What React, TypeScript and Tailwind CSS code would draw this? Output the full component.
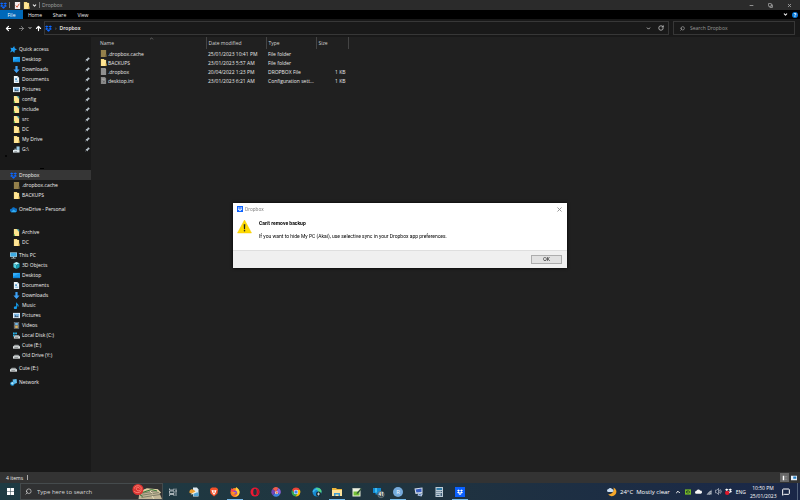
import type { ReactNode } from "react";
import { ArrowLeft, ArrowRight, ArrowUp, ChevronDown, ChevronUp, Copy, MessageSquare, Minus, RotateCw, Search, X } from "lucide-react";

type IconName =
  | "star" | "desktop" | "download" | "document" | "picture" | "folder" | "folderTag" | "folderDim"
  | "drive" | "osDrive" | "netDrive" | "dropbox" | "cloud" | "pc" | "cube" | "music" | "video"
  | "network" | "file" | "config";

type TreeItem = {
  label: string;
  icon: IconName;
  root?: boolean;
  pinned?: boolean;
  selected?: boolean;
};

const shapes: Record<IconName, ReactNode> = {
  star: <path d="m9.500 0 1.500 5 5 3-5 2-1 6-4-4-6 3 3-6-2-5 5 .5z" fill="#1d9bf0" />,
  desktop: (
    <>
      <path d="M0 2h16v12H0z" fill="#1595ea" />
      <path d="M0 2h16L0 10z" fill="#35adf8" />
      <path d="M1 12h14v1H1z" fill="#0967ad" />
    </>
  ),
  download: <path d="M5.500 0h5v8H15l-7 8-7-8h4.500z" fill="#3da0f5" />,
  document: (
    <>
      <path d="M2 0h8l4 4v12H2z" fill="#eef4f8" />
      <path d="M10 0v4h4" fill="#a9bfce" />
      <path d="M5 5h4v4H5zM5 10h7v1H5zM5 12h7v1H5z" fill="#4b98cd" />
    </>
  ),
  picture: (
    <>
      <path d="M0 2h16v12H0z" fill="#e9f2fa" />
      <path d="M2 4h12v5H2z" fill="#7cb9e8" />
      <path d="m2 12 4-5 3 3 2-2 3 4z" fill="#365c7d" />
    </>
  ),
  folder: (
    <>
      <path d="M2 0h7l1 2h4v14H2z" fill="#f4d778" />
      <path d="M3 2h10v14H3z" fill="#ffe596" />
      <path d="M12 10h3v6h-3z" fill="#e6bf58" />
    </>
  ),
  folderTag: (
    <>
      <path d="M2 0h8l4 3v13H2z" fill="#ffe48d" />
      <path d="m8 0 6 7V1z" fill="#3b9aa8" />
      <path d="M2 12h2v4H2z" fill="#35b54a" />
    </>
  ),
  folderDim: (
    <>
      <path d="M2 0h12v16H2z" fill="#94804b" />
      <path d="M12 10h3v6h-3z" fill="#75643a" />
    </>
  ),
  drive: (
    <>
      <path d="m4 6-4 4v4h16v-4l-4-4z" fill="#9a9fa1" />
      <path d="M0 10h16v5H0z" fill="#e1e5e6" />
      <path d="M3 12h9v1H3z" fill="#343a3b" />
    </>
  ),
  osDrive: (
    <>
      <path d="M0 1h4v4H0zM5 1h4v4H5zM0 6h4v4H0z" fill="#28b6ed" />
      <path d="m5 7-3 4h14l-3-4z" fill="#979c9e" />
      <path d="M2 10h14v5H2z" fill="#dce2e4" />
      <path d="M4 12h8v1H4z" fill="#30383b" />
    </>
  ),
  netDrive: (
    <>
      <path d="M8 1h7v8H8z" fill="#9bcbe4" />
      <path d="M3 6h5v4H3z" fill="#8a979e" />
      <path d="M0 9h15v6H0z" fill="#dfe8ec" />
      <path d="M3 12h6v1H3z" fill="#4a5358" />
    </>
  ),
  dropbox: (
    <path d="M4 1 0 3.700l4 2.600 4-2.600zM12 1 8 3.700l4 2.600 4-2.600zM4 6.300 0 9l4 2.600L8 9zM12 6.300 8 9l4 2.600L16 9zM8 10l-4 2.600L8 15.200l4-2.600z" fill="#0b67ff" />
  ),
  cloud: (
    <>
      <path d="M4 14a4 4 0 0 1-.5-8A5 5 0 0 1 12 5a4 4 0 0 1 1 9z" fill="#0d6fc4" />
      <path d="m2 14 6-6 7 5-2 1z" fill="#32adf0" />
    </>
  ),
  pc: (
    <>
      <path d="M0 1h16v10H0z" fill="#bce4f6" />
      <path d="M1 2h14v8H1z" fill="#3daae4" />
      <path d="M7 11h2v2h4v2H3v-2h4z" fill="#b7ced8" />
    </>
  ),
  cube: (
    <>
      <path d="m8 0 7 3-7 4-7-4z" fill="#b8f3fa" />
      <path d="m1 3 7 4v9l-7-4z" fill="#4dd0e1" />
      <path d="m15 3-7 4v9l7-4z" fill="#149db5" />
    </>
  ),
  music: <path d="M7 0c1 4 6 4 6 9l-2 3c0-3-1-4-2-5v6a3.500 3.500 0 1 1-2-3z" fill="#159bea" />,
  video: (
    <>
      <path d="M2 0h12v16H2z" fill="#565c64" />
      <path d="M5 2h6v5H5z" fill="#6db6e4" />
      <path d="M5 8h6v6H5z" fill="#d6b15e" />
      <path d="M3 1v14M13 1v14" stroke="#e8eaec" strokeDasharray="1 2" />
    </>
  ),
  network: (
    <>
      <path d="m6 1 9-1 1 9-8 3z" fill="#65bfee" />
      <circle cx="5.500" cy="10.500" r="5" fill="#249bdc" />
      <path d="m2 10 3-3 4 2-3 4z" fill="#b5e5fa" />
    </>
  ),
  file: (
    <>
      <path d="M2 0h9l3 3v13H2z" fill="#909090" />
      <path d="M11 0v3h3" fill="#c2c2c2" />
    </>
  ),
  config: (
    <>
      <path d="M2 0h9l3 3v13H2z" fill="#858585" />
      <path d="M4 4h7v1H4zM4 6h7v1H4z" fill="#bdbdbd" />
      <circle cx="9" cy="11" r="2.500" fill="#4a4a4a" stroke="#bcbcbc" />
    </>
  ),
};

function Icon({ name, className = "size-[7px]" }: { name: IconName; className?: string }) {
  return (
    <svg viewBox="0 0 16 16" className={`shrink-0 ${className}`} aria-hidden="true">
      {shapes[name]}
    </svg>
  );
}

const quickAccess: TreeItem[] = [
  { label: "Quick access", icon: "star", root: true },
  { label: "Desktop", icon: "desktop", pinned: true },
  { label: "Downloads", icon: "download", pinned: true },
  { label: "Documents", icon: "document", pinned: true },
  { label: "Pictures", icon: "picture", pinned: true },
  { label: "config", icon: "folderTag", pinned: true },
  { label: "include", icon: "folderTag", pinned: true },
  { label: "src", icon: "folderTag", pinned: true },
  { label: "DC", icon: "folder", pinned: true },
  { label: "My Drive", icon: "folder", pinned: true },
  { label: "G:\\", icon: "netDrive", pinned: true },
];

const dropbox: TreeItem[] = [
  { label: "Dropbox", icon: "dropbox", root: true, selected: true },
  { label: ".dropbox.cache", icon: "folderDim" },
  { label: "BACKUPS", icon: "folder" },
];

const thisPc: TreeItem[] = [
  { label: "This PC", icon: "pc", root: true },
  { label: "3D Objects", icon: "cube" },
  { label: "Desktop", icon: "desktop" },
  { label: "Documents", icon: "document" },
  { label: "Downloads", icon: "download" },
  { label: "Music", icon: "music" },
  { label: "Pictures", icon: "picture" },
  { label: "Videos", icon: "video" },
  { label: "Local Disk (C:)", icon: "osDrive" },
  { label: "Cute (E:)", icon: "drive" },
  { label: "Old Drive (Y:)", icon: "drive" },
];

const files: { name: string; icon: IconName; date: string; type: string; size: string }[] = [
  { name: ".dropbox.cache", icon: "folderDim", date: "25/01/2023 10:41 PM", type: "File folder", size: "" },
  { name: "BACKUPS", icon: "folder", date: "23/01/2023 5:57 AM", type: "File folder", size: "" },
  { name: ".dropbox", icon: "file", date: "20/04/2022 1:23 PM", type: "DROPBOX File", size: "1 KB" },
  { name: "desktop.ini", icon: "config", date: "23/01/2023 6:21 AM", type: "Configuration sett...", size: "1 KB" },
];

function TreeGroup({ items }: { items: TreeItem[] }) {
  return (
    <ul>
      {items.map((item) => (
        <li key={item.label}>
          <a
            href="#"
            className={`flex h-[10px] items-center gap-[2px] pr-px ${item.root ? "pl-[10px]" : "pl-[13px]"} ${
              item.selected ? "bg-[#363636]" : ""
            }`}
          >
            <Icon name={item.icon} />
            <span>{item.label}</span>
            {item.pinned && (
              <svg viewBox="0 0 10 10" className="ml-auto size-[5px]" aria-hidden="true">
                <path d="m6 0 4 4-2 .5-2 2V9L3.500 6.500 0 10l2.500-4.500L1 4h2.500l2-2z" fill="#b5c0c8" />
              </svg>
            )}
          </a>
        </li>
      ))}
    </ul>
  );
}

function TitleBar() {
  return (
    <header className="flex h-[10px] items-center bg-[#2b2b2b] text-[#a5a5a5]">
      <Icon name="dropbox" />
      <span className="ml-[2px] h-[6px] w-px bg-[#777]" />
      <button aria-label="Properties" className="ml-[4px]">
        <svg viewBox="0 0 16 16" className="size-[7px]">
          <path d="M2 0h12v16H2z" fill="#f6eeee" />
          <path d="m4 8 3 4 5-8" fill="none" stroke="#d5502c" strokeWidth="2" />
        </svg>
      </button>
      <button aria-label="New folder" className="ml-[2px]">
        <Icon name="folder" className="size-[7px]" />
      </button>
      <button aria-label="Customise toolbar" className="ml-[2px]">
        <ChevronDown className="size-[5px] text-[#eee]" strokeWidth={5} />
      </button>
      <span className="mx-[2px] h-[6px] w-px bg-[#777]" />
      <h1>Dropbox</h1>
      <div className="ml-auto flex items-center gap-[14px] pr-[8px]">
        <button aria-label="Minimise"><Minus className="size-[5px]" strokeWidth={4} /></button>
        <button aria-label="Restore"><Copy className="size-[5px] -scale-x-100 rotate-90" strokeWidth={4} /></button>
        <button aria-label="Close"><X className="size-[5px]" strokeWidth={4} /></button>
      </div>
    </header>
  );
}

function Ribbon() {
  return (
    <nav className="flex h-[9px] items-center bg-black text-[#eee]">
      <button className="h-[9px] w-[23px] bg-[#0068b8] text-white">File</button>
      <button className="w-[24px]">Home</button>
      <button className="w-[25px]">Share</button>
      <button className="w-[22px]">View</button>
      <button aria-label="Expand ribbon" className="ml-auto"><ChevronDown className="size-[5px]" strokeWidth={5} /></button>
      <button aria-label="Help" className="mr-[2px] ml-[4px] flex size-[6px] items-center justify-center rounded-full bg-[#0a79d8] font-bold text-white">?</button>
    </nav>
  );
}

function AddressBar() {
  return (
    <div className="flex h-[18px] items-center bg-[#191919] pr-[5px]">
      <div className="flex w-[44px] items-center text-white">
        <button aria-label="Back" className="ml-[5px]"><ArrowLeft className="size-[7px]" strokeWidth={4} /></button>
        <button aria-label="Forward" className="ml-[6px] text-[#8d8d8d]"><ArrowRight className="size-[7px]" strokeWidth={3} /></button>
        <button aria-label="Recent locations" className="ml-[3px]"><ChevronDown className="size-[4px]" strokeWidth={5} /></button>
        <button aria-label="Up" className="ml-[3px]"><ArrowUp className="size-[7px]" strokeWidth={4} /></button>
      </div>
      <div className="flex h-[14px] flex-1 items-center border border-[#373737] text-[#f0f0f0]">
        <Icon name="dropbox" />
        <span className="mx-[3px] text-[#a0a0a0]">›</span>
        <span className="font-semibold">Dropbox</span>
        <button aria-label="Previous locations" className="ml-auto text-[#ccc]"><ChevronDown className="size-[5px]" strokeWidth={4} /></button>
        <button aria-label="Refresh" className="mr-[4px] ml-[7px] text-[#ccc]"><RotateCw className="size-[6px]" strokeWidth={3} /></button>
      </div>
      <label className="ml-[4px] flex h-[14px] w-[122px] items-center border border-[#373737]">
        <Search className="ml-[6px] size-[5px] -scale-x-100 text-[#aaa]" strokeWidth={3} />
        <input aria-label="Search Dropbox" placeholder="Search Dropbox" className="ml-[5px] min-w-0 flex-1 bg-transparent outline-none placeholder:text-[#999]" />
      </label>
    </div>
  );
}

function Sidebar() {
  return (
    <aside className="w-[91px] shrink-0 bg-[#191919] pt-[7px] text-[#f2f2f2]">
      <TreeGroup items={quickAccess} />
      <div className="flex h-[16px] items-center justify-between pr-[47px] pl-[5px]" aria-hidden="true">
        <span className="mb-[12px] size-[2px] bg-black/70" />
        <span className="mt-[12px] h-px w-[4px] bg-black" />
      </div>
      <TreeGroup items={dropbox} />
      <div className="mt-[4px] mb-[13px]">
        <TreeGroup items={[{ label: "OneDrive - Personal", icon: "cloud", root: true }]} />
      </div>
      <TreeGroup items={[{ label: "Archive", icon: "folderTag" }, { label: "DC", icon: "folder" }]} />
      <div className="my-[3px]"><TreeGroup items={thisPc} /></div>
      <TreeGroup items={[{ label: "Cute (E:)", icon: "drive", root: true }]} />
      <div className="mt-[4px]"><TreeGroup items={[{ label: "Network", icon: "network", root: true }]} /></div>
    </aside>
  );
}

function FileTable() {
  return (
    <main className="flex-1 bg-[#202020]">
      <table className="w-[258px] table-fixed text-[#e8e8e8]">
        <thead className="text-[#d2d2d2]">
          <tr className="h-[12px] text-left">
            <th className="relative w-[115px] border-r border-[#444] pl-[9px] font-normal">
              Name
              <ChevronUp className="absolute -top-px left-[58px] size-[5px] text-[#bbb]" />
            </th>
            <th className="w-[60px] border-r border-[#444] pl-[2px] font-normal">Date modified</th>
            <th className="w-[50px] border-r border-[#444] pl-[2px] font-normal">Type</th>
            <th className="border-r border-[#444] pl-[2px] font-normal">Size</th>
          </tr>
        </thead>
        <tbody>
          {files.map((file) => (
            <tr key={file.name} className="h-[9px] whitespace-nowrap">
              <td className="pl-[9px]">
                <div className="flex items-center gap-px">
                  <Icon name={file.icon} className="size-[7px]" />
                  {file.name}
                </div>
              </td>
              <td className="pl-[2px]">{file.date}</td>
              <td className="pl-[2px]">{file.type}</td>
              <td className="pr-[3px] text-right">{file.size}</td>
            </tr>
          ))}
        </tbody>
      </table>
    </main>
  );
}

function StatusBar() {
  return (
    <footer className="flex h-[11px] items-center bg-[#333] pl-[6px] text-[#eee]">
      <span>4 items</span>
      <span className="ml-[4px] h-[5px] w-px bg-[#aaa]" />
      <button aria-label="Details view" className="ml-auto flex h-[9px] w-[9px] items-center justify-center bg-[#686868]">
        <svg viewBox="0 0 8 8" className="size-[6px]"><path d="M1 1h2v6H1z" fill="#fff" /><path d="M4 2h3M4 4h3M4 6h3" stroke="#aaa" strokeWidth=".6" /></svg>
      </button>
      <button aria-label="Large icons view" className="mr-[3px] ml-[2px]">
        <svg viewBox="0 0 8 8" className="size-[6px]"><path d="M0 1h8v6H0z" fill="#e6f0f8" /><path d="M3 2h4v3H3z" fill="#207cc5" /></svg>
      </button>
    </footer>
  );
}

function Dialog() {
  return (
    <div className="pointer-events-none fixed inset-0 flex items-center justify-center pb-[29px]">
      <section role="dialog" aria-labelledby="dialog-title" className="pointer-events-auto w-[334px] bg-white font-['Roboto',sans-serif] text-black shadow-[0_0_3px_#000]">
        <header className="flex h-[12px] items-center px-[4px] text-[#8a8a8a]">
          <svg viewBox="0 0 16 16" className="mr-[2px] size-[6px]" aria-hidden="true">
            <path d="M0 0h16v16H0z" fill="#0b61ff" />
            <path d="m5 3-3 2 3 2 3-2 3 2 3-2-3-2-3 2zM5 7 2 9l3 2 3-2 3 2 3-2-3-2-3 2zM8 10l-3 2 3 2 3-2z" fill="#fff" />
          </svg>
          <span>Dropbox</span>
          <button aria-label="Close dialog" className="ml-auto"><X className="size-[7px]" strokeWidth={3} /></button>
        </header>
        <div className="flex h-[35px] gap-[7px] pt-[4px] pl-[4px]">
          <svg viewBox="0 0 28 28" className="size-[15px]" aria-hidden="true">
            <path d="M14 2 27 26H1z" fill="#ffdc00" stroke="#f3c900" strokeLinejoin="round" />
            <path d="M12.500 10h3l-.5 9h-2z" fill="#222" />
            <circle cx="14" cy="22" r="1.500" fill="#222" />
          </svg>
          <div>
            <h2 id="dialog-title" className="font-bold">Can't remove backup</h2>
            <p className="mt-[5px]">If you want to hide My PC (Akai), use selective sync in your Dropbox app preferences.</p>
          </div>
        </div>
        <footer className="flex h-[18px] items-center justify-end border-t border-[#dfdfdf] bg-[#f0f0f0] pr-[5px] pb-px">
          <button className="h-[9px] w-[31px] border border-[#adadad] bg-[#e1e1e1] leading-[7px]">OK</button>
        </footer>
      </section>
    </div>
  );
}

const apps: { label: string; open?: boolean; art: ReactNode }[] = [
  {
    label: "Task view",
    art: <path d="M3 3v3h9V3M3 18v-3h9v3M3 8h9v5H3zM16 3v15M15 8h3" fill="none" stroke="#d4dadd" strokeWidth="1.500" />,
  },
  {
    label: "File transfer",
    art: (
      <>
        <path d="M8 1h8l3 4v14H8z" fill="#dceaf2" />
        <path d="M9 11h10v7H9z" fill="#53a5d5" />
        <path d="M1 8c3-5 7-4 12 1l-5 4-7-1z" fill="#ed9f31" />
        <path d="m3 14 10-5 2 2-9 4z" fill="#f7efd8" />
      </>
    ),
  },
  {
    label: "Brave",
    art: (
      <>
        <path d="m6 1-4 3 1 9 7 6 7-6 1-9-4-3z" fill="#f3512a" />
        <path d="m5 6 5 1 5-1-2 6-3 4-3-4z" fill="#fff" />
        <path d="m8 9 2 4 2-4z" fill="#f3512a" />
      </>
    ),
  },
  {
    label: "Firefox",
    open: true,
    art: (
      <>
        <circle cx="10" cy="11" r="9" fill="#ff7b24" />
        <path d="M12 0c5 3 8 7 7 12-1 5-6 8-11 7 9-2 9-9 3-11z" fill="#ffd43b" />
        <path d="M1 8 3 2l3 4 4 1-2 3z" fill="#ff4058" />
        <circle cx="10" cy="11" r="4" fill="#8145dc" />
        <path d="M5 10c3-1 4 1 7 0-1 4-5 5-8 3z" fill="#ff9926" />
      </>
    ),
  },
  {
    label: "Opera",
    art: (
      <>
        <circle cx="10" cy="10" r="9" fill="#ed1934" />
        <ellipse cx="10" cy="10" rx="3.500" ry="6.500" fill="#24343b" />
        <path d="M13 2a9 9 0 0 1 0 16c3-4 3-12 0-16" fill="#b30d25" />
      </>
    ),
  },
  {
    label: "Photo app",
    art: (
      <>
        <path d="M10 10 3 4a9 9 0 0 1 12-2z" fill="#f05b4e" />
        <path d="m10 10 5-8a9 9 0 0 1 3 13z" fill="#8e62e3" />
        <path d="m10 10 8 5a9 9 0 0 1-14 2z" fill="#3b80df" />
        <path d="m10 10-6 7A9 9 0 0 1 3 4z" fill="#7046b8" />
        <circle cx="11" cy="11" r="3" fill="#efeef9" />
        <path d="m11 8 3 3-3 3-2-2z" fill="#ee8151" />
      </>
    ),
  },
  {
    label: "Chrome",
    art: (
      <>
        <path d="M2 6a9 9 0 0 1 16 0h-8l-3 7z" fill="#ea4335" />
        <path d="M2 6a9 9 0 0 0 7 13l4-7-5 1z" fill="#34a853" />
        <path d="M18 6a9 9 0 0 1-9 13l5-8-2-5z" fill="#fbbc05" />
        <circle cx="10" cy="10" r="4.500" fill="#fff" />
        <circle cx="10" cy="10" r="3.500" fill="#4285f4" />
      </>
    ),
  },
  {
    label: "Edge",
    art: (
      <>
        <circle cx="10" cy="10" r="9" fill="#1688ce" />
        <path d="M7 2c8-3 15 5 11 10-2 2-5 2-6 0 2-3-1-6-4-7" fill="#51d586" />
        <path d="M1 9C4 2 11 2 13 7 8 4 5 7 4 11z" fill="#3bb8ee" />
        <circle cx="13" cy="14" r="5" fill="#172c35" />
        <path d="M10 14h6M13 11v6" stroke="#e9eef0" strokeWidth="1.500" />
      </>
    ),
  },
  {
    label: "File Explorer",
    open: true,
    art: (
      <>
        <path d="M0 2h8l2 2h10v14H0z" fill="#edb73d" />
        <path d="M0 6h20v12H0z" fill="#ffe39a" />
        <path d="M4 12h12v6h-3v-3H7v3H4z" fill="#3d9bd0" />
      </>
    ),
  },
  {
    label: "Notepad++",
    art: (
      <>
        <path d="M1 2h16v17H1z" fill="#edf2df" />
        <path d="M3 9h12v8H3z" fill="#74bf36" />
        <path d="M2 3h14" stroke="#9ba29d" strokeDasharray="1 1" strokeWidth="2" />
        <path d="m18 2 2 2-8 9-3 1 1-3z" fill="#31503a" />
      </>
    ),
  },
  {
    label: "Messages",
    art: (
      <>
        <path d="M0 2h16v10H9v3H5v-3H0z" fill="#118bd3" />
        <path d="M4 2h4v9H4z" fill="#42bbef" />
        <circle cx="16" cy="15" r="6.500" fill="#394a51" stroke="#8e9799" />
        <text x="16" y="18" textAnchor="middle" fontSize="9" fontWeight="bold" fill="#fff">41</text>
      </>
    ),
  },
  {
    label: "RStudio",
    open: true,
    art: (
      <>
        <circle cx="10" cy="10" r="10" fill="#75aadb" />
        <text x="10" y="14.500" textAnchor="middle" fontSize="12" fill="#eff7ff">R</text>
      </>
    ),
  },
  {
    label: "Remote desktop",
    art: (
      <>
        <path d="m1 3 16-2v11L3 14z" fill="#d6dfed" />
        <path d="m3 5 12-2v7L5 11z" fill="#375dbd" />
        <path d="m9 12 9 1-3 6-8-2z" fill="#bed1e6" />
        <path d="m10 14 5 1-2 2-4-1z" fill="#4c70ae" />
      </>
    ),
  },
  {
    label: "Calculator",
    art: (
      <>
        <path d="M3 0h15v20H3z" fill="#bccad4" />
        <path d="M5 2h11v4H5z" fill="#317da9" />
        <path d="M5 8h2v2H5zM9 8h2v2H9zM13 8h3v2h-3zM5 12h2v2H5zM9 12h2v2H9zM13 12h3v6h-3zM5 16h6v2H5z" fill="#41617a" />
      </>
    ),
  },
  {
    label: "Dropbox",
    open: true,
    art: (
      <>
        <path d="M0 0h20v20H0z" fill="#0b61ff" />
        <path d="M7 5 4 7l3 2 3-2 3 2 3-2-3-2-3 2zM7 9l-3 2 3 2 3-2 3 2 3-2-3-2-3 2zM10 12l-3 2 3 2 3-2z" fill="#fff" />
      </>
    ),
  },
];

function Taskbar() {
  return (
    <nav aria-label="Taskbar" className="flex h-[17px] items-center bg-linear-to-r from-[#1e3b43] via-[#20343f] to-[#1a2748] text-[6px] text-white">
      <button aria-label="Start" className="flex w-[20px] justify-center">
        <svg viewBox="0 0 14 14" className="size-[7px]"><path d="M0 0h6.500v6.500H0zM7.500 0H14v6.500H7.500zM0 7.500h6.500V14H0zM7.500 7.500H14V14H7.500z" fill="#fff" /></svg>
      </button>
      <label className="flex h-full w-[143px] items-center border border-[#454b4d] bg-[#303132]">
        <Search className="ml-[4px] size-[7px] -scale-x-100 text-[#eee]" strokeWidth={2} />
        <input aria-label="Type here to search" placeholder="Type here to search" className="ml-[5px] min-w-0 flex-1 bg-transparent outline-none placeholder:text-[#d6d6d6]" />
        <svg viewBox="0 0 60 30" className="h-[15px] w-[30px]" aria-hidden="true">
          <path d="m15 17 12-7 25 1 8 19H13z" fill="#c0b596" />
          <path d="m17 19 34-6M16 23l38-6M19 27l37-6" stroke="#6b6d59" strokeWidth="1.500" />
          <path d="m19 15 11-5 21 2 6 6" fill="none" stroke="#dfd1a3" strokeWidth="3" />
          <path d="m14 18 7 8M21 17l18-6 11 3" fill="none" stroke="#397b37" strokeWidth="2" />
          <circle cx="12" cy="11" r="11" fill="#dc3633" />
          <path d="M5 9c0-6 10-8 13-2s-7 9-9 4 4-6 6-2M4 14c4 5 12 4 15-1" fill="none" stroke="#ff9183" strokeWidth="1.500" />
          <path d="m36 14 5 5M40 24l4 6" stroke="#e9e0bd" strokeWidth="2" />
        </svg>
      </label>
      <div className="flex h-full w-[307px]">
        {apps.map((app) => (
          <button key={app.label} aria-label={app.label} className="relative flex flex-1 items-center justify-center">
            <svg viewBox="0 0 20 20" className="size-[10px] overflow-visible">{app.art}</svg>
            {app.open && <span className="absolute bottom-0 h-px w-[16px] bg-[#76b9e8]" />}
          </button>
        ))}
      </div>
      <div className="ml-auto flex h-full items-center">
        <button className="mr-[5px] flex items-center gap-[3px] whitespace-nowrap">
          <svg viewBox="0 0 20 20" className="size-[10px]" aria-hidden="true">
            <path d="M13 1a9 9 0 1 1-11 13c7 2 13-5 11-13" fill="#f4a62a" />
            <path d="M3 10a3 3 0 0 1 0-6 4 4 0 0 1 7 0 3 3 0 0 1 0 6z" fill="#c9def4" />
          </svg>
          <span>24°C</span>
          <span>Mostly clear</span>
        </button>
        <button aria-label="Show hidden icons"><ChevronUp className="size-[6px]" strokeWidth={4} /></button>
        <svg viewBox="0 0 16 16" className="ml-[4px] size-[6px]" aria-label="Graphics settings"><path d="M0 1h16v14H0z" fill="#75b928" /><path d="M2 8c4-6 9-5 12 0-4 5-8 5-12 0m3 0c2 3 5 3 7 0-2-3-5-3-7 0" fill="#1e3524" /></svg>
        <svg viewBox="0 0 16 16" className="ml-[4px] size-[7px]" aria-label="OneDrive"><path d="M3 13a3 3 0 0 1 0-6 5 5 0 0 1 9-1 3.500 3.500 0 0 1 1 7z" fill="#f5f5f5" /></svg>
        <svg viewBox="0 0 16 16" className="ml-[4px] size-[6px]" aria-label="Wi-Fi"><path d="M15 1v14H1z" fill="#7c8795" /><path d="M5 15a8 8 0 0 1 10-8M9 15a5 5 0 0 1 6-4" fill="none" stroke="#e0e5e9" strokeWidth="1.500" /></svg>
        <svg viewBox="0 0 16 16" className="ml-[3px] size-[7px]" aria-label="Volume"><path d="M1 5h3l4-4v14l-4-4H1zM10 5q3 3 0 6M12 3q5 5 0 10" fill="none" stroke="#c6cbd4" strokeWidth="1.500" /></svg>
        <svg viewBox="0 0 16 16" className="ml-[3px] size-[7px]" aria-label="Dropbox status"><path d="m4 1-4 3 4 3 4-3 4 3 4-3-4-3-4 3zM8 7l-4 3 4 3 4-3z" fill="#fff" /><circle cx="5" cy="11" r="5" fill="#df182b" /><path d="m10 8 3-2 3 2-3 3z" fill="#fff" /></svg>
        <button className="ml-[4px] text-[5px]">ENG</button>
        <div className="ml-[4px] w-[26px] text-center text-[5px] leading-[8px]"><p>10:50 PM</p><p>25/01/2023</p></div>
        <button aria-label="Notifications" className="ml-[6px]"><MessageSquare className="size-[8px]" strokeWidth={3} /></button>
        <span className="ml-[7px] h-full w-px bg-[#52627b]" />
        <span className="w-[2px]" />
      </div>
    </nav>
  );
}

export default function App() {
  return (
    <div className="flex min-h-screen flex-col bg-[#202020] font-['Open_Sans',sans-serif] text-[5px] leading-[8px]">
      <TitleBar />
      <Ribbon />
      <AddressBar />
      <div className="flex flex-1">
        <Sidebar />
        <FileTable />
      </div>
      <StatusBar />
      <Taskbar />
      <Dialog />
    </div>
  );
}
